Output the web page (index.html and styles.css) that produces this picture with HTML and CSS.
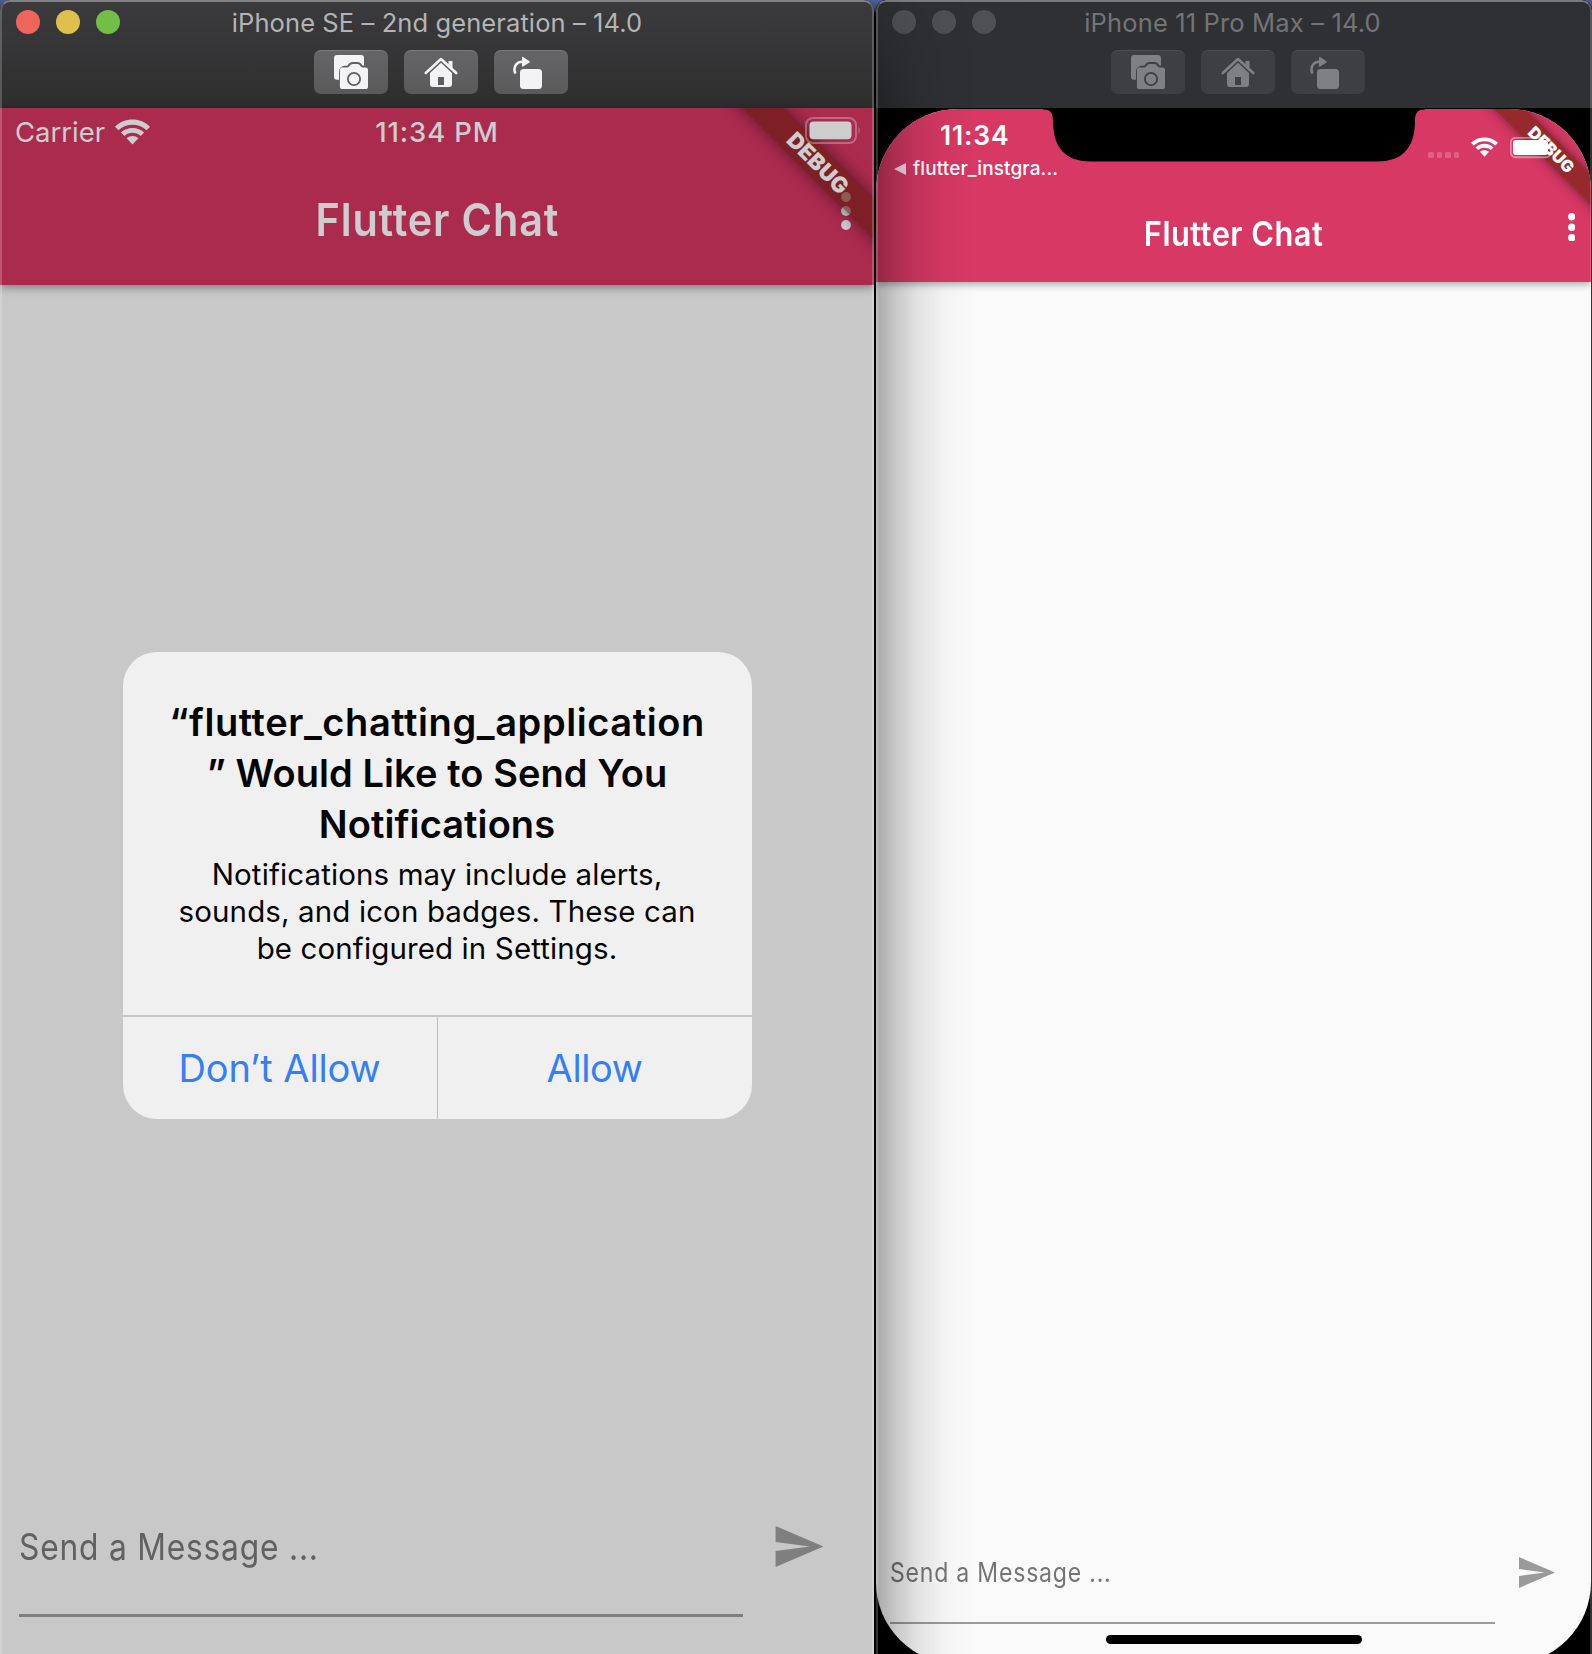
FILE: index.html
```html
<!DOCTYPE html>
<html lang="en">
<head>
<meta charset="utf-8">
<title>Simulators</title>
<link rel="stylesheet" href="styles.css">
</head>
<body>
<svg class="defs" aria-hidden="true">
  <symbol id="camera" viewBox="0 0 36 36">
    <path d="M4 1h24a3 3 0 0 1 3 3v7.500h-1.500l-1-1.500a5 5 0 0 0-4-2h-5a5 5 0 0 0-4 2l-1.200 1.800h-2.800a5.500 5.500 0 0 0-5.500 5.500v8.500h-2a3 3 0 0 1-3-3v-18.800a3 3 0 0 1 3-3z"/>
    <path fill-rule="evenodd" d="M10 13.400h4.500c2.200 0 2.300-3.400 5.200-3.400h4.600c2.900 0 3 3.400 5.200 3.400h2.900a2.600 2.600 0 0 1 2.600 2.600v16.400a2.600 2.600 0 0 1-2.600 2.600h-22.900a2.600 2.600 0 0 1-2.600-2.600v-16.400a2.600 2.600 0 0 1 3.100-2.600zM21 18a7 7 0 1 0 0 14a7 7 0 0 0 0-14zm0 1.800a5.200 5.200 0 1 1 0 10.400a5.200 5.200 0 0 1 0-10.400z"/>
  </symbol>
  <symbol id="home" viewBox="0 -1 36 36">
    <path d="M2.800 18L18 4L33.200 18" fill="none" stroke="currentColor" stroke-width="2.600" stroke-linecap="round" stroke-linejoin="round"/>
    <path d="M25.500 6h4v8.500l-4-3.800z"/>
    <path fill-rule="evenodd" d="M18 7.800l11 10.200v11a3 3 0 0 1-3 3h-16a3 3 0 0 1-3-3v-11zM15 22v8h6v-8z"/>
  </symbol>
  <symbol id="rotate" viewBox="2 -1 36 36">
    <rect x="9" y="14" width="22" height="20" rx="3.500"/>
    <path d="M4 17.500C2 11 6 6.800 11.500 6.800" fill="none" stroke="currentColor" stroke-width="2.600" stroke-linecap="round"/>
    <path d="M11 2.500q0-1 1-.500l6.500 4.200q.8.600 0 1.200l-6.500 4.200q-1 .500-1-.500z"/>
  </symbol>
  <symbol id="wifi" viewBox="0 0 34 25">
    <path d="M0 7.300C9.500-1.800 24.500-1.800 34 7.300L30.600 10.700C23 3.600 11 3.600 3.400 10.700z"/>
    <path d="M5.700 13c6.200-6 16.400-6 22.600 0l-3.400 3.400c-4.500-4.100-11.300-4.100-15.800 0z"/>
    <path d="M11.300 18.600c3.200-2.800 8.200-2.800 11.400 0l-5.700 6.100z"/>
  </symbol>
  <symbol id="more" viewBox="0 0 10 38">
    <circle cx="5" cy="5" r="4.900"/><circle cx="5" cy="19" r="4.900"/><circle cx="5" cy="33" r="4.900"/>
  </symbol>
  <symbol id="send" viewBox="0 0 21 18">
    <path d="M0 18L21 9L0 0v7l15 2l-15 2z"/>
  </symbol>
</svg>

<section class="window window--se">
  <header class="titlebar">
    <div class="lights"><i class="red"></i><i class="yellow"></i><i class="green"></i></div>
    <h1>iPhone SE – 2nd generation – 14.0</h1>
    <div class="tools">
      <button><svg><use href="#camera"/></svg></button>
      <button><svg><use href="#home"/></svg></button>
      <button><svg><use href="#rotate"/></svg></button>
    </div>
  </header>
  <div class="screen">
    <div class="top">
      <div class="status">
        <div class="carrier">Carrier <svg class="wifi"><use href="#wifi"/></svg></div>
        <time>11:34 PM</time>
        <svg class="battery" viewBox="0 0 57 27">
          <rect class="shell" x="1" y="1" width="50" height="25" rx="7"/>
          <rect x="4.500" y="4.500" width="42" height="17.700" rx="4"/>
          <path class="nub" d="M53.500 9.500q2.500 4 0 8z"/>
        </svg>
      </div>
      <div class="appbar">
        <h2>Flutter Chat</h2>
        <svg class="more"><use href="#more"/></svg>
      </div>
      <div class="debug"><span>DEBUG</span></div>
    </div>
    <main></main>
    <div class="composer">
      <div class="field"><span>Send a Message ...</span></div>
      <svg class="send"><use href="#send"/></svg>
    </div>
    <div class="alert">
      <div class="message">
        <h3><span class="app-name">“flutter_chatting_application</span><br>” Would Like to Send You<br>Notifications</h3>
        <p>Notifications may include alerts,<br>sounds, and icon badges. These can<br>be configured in Settings.</p>
      </div>
      <div class="actions"><button>Don’t Allow</button><button>Allow</button></div>
    </div>
  </div>
</section>

<section class="window window--max">
  <header class="titlebar">
    <div class="lights"><i></i><i></i><i></i></div>
    <h1>iPhone 11 Pro Max – 14.0</h1>
    <div class="tools">
      <button><svg><use href="#camera"/></svg></button>
      <button><svg><use href="#home"/></svg></button>
      <button><svg><use href="#rotate"/></svg></button>
    </div>
  </header>
  <div class="screen">
    <div class="top">
      <svg class="notch" viewBox="0 0 382 53"><path d="M0 0h382v.500c-7 0-10 3-10 11c0 28-13 41-38 41h-286c-25 0-38-13-38-41c0-8-3-11-10-11z"/></svg>
      <div class="status">
        <div class="clock"><time>11:34</time><div class="back"><svg viewBox="0 0 12 12"><path d="M0 6L12 0v12z"/></svg>flutter_instgra...</div></div>
        <div class="indicators">
          <div class="cell"><i></i><i></i><i></i><i></i></div>
          <svg class="wifi"><use href="#wifi"/></svg>
          <svg class="battery" viewBox="0 0 42 22">
            <rect class="shell" x=".8" y=".8" width="40" height="19.500" rx="5"/>
            <rect x="3" y="3" width="35" height="15" rx="3"/>
          </svg>
        </div>
      </div>
      <div class="appbar">
        <h2>Flutter Chat</h2>
        <svg class="more"><use href="#more"/></svg>
      </div>
      <div class="debug"><span>DEBUG</span></div>
    </div>
    <main></main>
    <div class="composer">
      <div class="field"><span>Send a Message ...</span></div>
      <svg class="send"><use href="#send"/></svg>
    </div>
    <div class="home-indicator"></div>
  </div>
</section>
</body>
</html>
```

FILE: styles.css
```css
* { box-sizing: border-box; }

body {
  margin: 0;
  width: 1592px;
  height: 1654px;
  display: flex;
  gap: 2px;
  overflow: hidden;
  background: linear-gradient(#4c5f96 0, #39487a 8px, #000 14px);
  font-family: Inter, "Liberation Sans", sans-serif;
}

h1, h2, h3, p { margin: 0; }
button { border: 0; margin: 0; padding: 0; font: inherit; color: inherit; background: none; }
svg { display: block; fill: currentColor; flex: none; }
.defs { position: absolute; width: 0; height: 0; }

/* Simulator window */
.window {
  position: relative;
  height: 1654px;
  display: flex;
  flex-direction: column;
  overflow: hidden;
  border-radius: 10px 10px 0 0;
}
.window::after {
  content: "";
  position: absolute;
  inset: 0;
  z-index: 5;
  border: 2px solid rgba(255, 255, 255, .2);
  border-top-color: rgba(255, 255, 255, .36);
  border-bottom: 0;
  border-radius: 10px 10px 0 0;
  pointer-events: none;
}
.window--se { width: 874px; }
.window--max { width: 716px; background: #000; }

.titlebar {
  position: relative;
  height: 108px;
  flex: none;
  display: flex;
  flex-direction: column;
  align-items: center;
  padding-top: 1px;
  background: linear-gradient(#3b3b3d, #2e2e2f);
  color: #b4b4b5;
}
.titlebar h1 {
  font-size: 25.500px;
  font-weight: 400;
  line-height: 44px;
  letter-spacing: .1px;
}
.lights { position: absolute; left: 16px; top: 10px; display: flex; gap: 16px; }
.lights i { width: 24px; height: 24px; border-radius: 50%; background: #4f5053; }
.lights .red { background: #ed6659; }
.lights .yellow { background: #e0c04c; }
.lights .green { background: #72be47; }
.tools { display: flex; gap: 16px; margin: 5px 0 0 8px; }
.tools button {
  width: 74px;
  height: 44px;
  display: grid;
  place-items: center;
  border-radius: 7px;
  background: linear-gradient(#656567, #5a5a5b);
  box-shadow: inset 0 1px rgba(255, 255, 255, .14);
  color: #f3f3f5;
}
.tools svg { width: 36px; height: 36px; }

.window--max .titlebar { background: #2f3033; color: #737477; }
.window--max h1 { letter-spacing: .15px; padding-right: 3px; }
.window--max .tools button { background: #3e3f42; color: #7f8083; box-shadow: inset 0 1px rgba(255, 255, 255, .08); }

/* Shade cast by the neighbouring window */
.window--max::before {
  content: "";
  position: absolute;
  z-index: 4;
  inset: 0 auto 0 0;
  width: 100px;
  background: linear-gradient(90deg, rgba(0,0,0,.32), rgba(0,0,0,.2) 20px, rgba(0,0,0,.09) 42px, rgba(0,0,0,.025) 70px, transparent);
  -webkit-mask: linear-gradient(rgba(0,0,0,.2), #000 130px);
  mask: linear-gradient(rgba(0,0,0,.2), #000 130px);
  pointer-events: none;
}

/* Phone screen */
.screen { position: relative; flex: 1; display: flex; flex-direction: column; }
.screen main { flex: 1; }
.top { position: relative; z-index: 1; display: flex; flex-direction: column; flex: none; }
.status { position: relative; z-index: 2; display: grid; grid-template-columns: 1fr auto 1fr; align-items: center; }
.appbar { flex: 1; display: grid; grid-template-columns: 1fr auto 1fr; align-items: center; }
.appbar h2 { grid-column: 2; font-weight: 600; white-space: nowrap; transform: scaleX(.92); }
.more { justify-self: end; }
.shell { fill: none; stroke: currentColor; stroke-width: 2; opacity: .4; }
.nub { opacity: .4; }
.composer { display: flex; flex: none; }
.field { white-space: pre; }
.field span { display: inline-block; transform: scaleX(.87); transform-origin: 0 50%; }

/* Corner ribbon */
.debug { position: absolute; inset: 0; z-index: 1; overflow: hidden; }
.debug span {
  position: absolute;
  display: block;
  text-align: center;
  font-weight: 900;
  transform: translate(-50%, -50%) rotate(45deg);
}

/* iPhone SE */
.window--se .screen { background: #c8c8c8; }
.window--se .top { height: 177px; background: #ab2b4f; color: #cdcdce; box-shadow: 0 2px 9px rgba(0, 0, 0, .4); }
.window--se .status { height: 48px; padding: 0 13px 0 15px; font-size: 27.500px; }
.carrier { display: flex; align-items: center; gap: 10px; }
.carrier .wifi { width: 35px; height: 26px; margin-top: -1px; }
.window--se time { font-weight: 500; letter-spacing: .9px; transform: translateX(-1px); }
.window--se .battery { width: 57px; height: 27px; justify-self: end; margin: -3px -1px 0 0; }
.window--se .appbar { padding-bottom: 2px; }
.window--se h2 { font-size: 45px; letter-spacing: .9px; }
.window--se .more { width: 10px; height: 38px; margin: -18px 23px 0 0; }
.window--se .debug span {
  left: 818px;
  top: 55px;
  width: 300px;
  height: 28px;
  line-height: 28px;
  font-size: 22px;
  background: rgba(98, 26, 11, .63);
  box-shadow: 0 0 16px rgba(0, 0, 0, .5);
}
.window--se .composer { height: 154px; padding-left: 19px; gap: 32px; }
.window--se .field {
  width: 724px;
  height: 117px;
  line-height: 94px;
  border-bottom: 3px solid #7f7f7f;
  font-size: 36.500px;
  letter-spacing: .9px;
  color: #616161;
}
.window--se .send { width: 49px; height: 41px; margin-top: 26px; color: #7f7f7f; }

/* Permission alert */
.alert {
  position: absolute;
  z-index: 3;
  left: 122.500px;
  top: 544px;
  width: 629px;
  height: 467px;
  display: flex;
  flex-direction: column;
  overflow: hidden;
  border-radius: 34px;
  background: #f0f0f0;
  text-align: center;
  color: #050505;
}
.message { flex: 1; padding-top: 45px; border-bottom: 2px solid #c6c6c6; white-space: nowrap; }
.alert h3 { font-size: 38px; font-weight: 600; line-height: 51.200px; letter-spacing: .08px; }
.app-name { letter-spacing: .58px; }
.alert p { font-size: 29.500px; line-height: 37.300px; letter-spacing: .12px; margin-top: 5px; }
.actions { height: 102px; display: flex; color: #347ff6; font-size: 38px; }
.actions button { flex: 1; line-height: 102px; letter-spacing: -.1px; }
.actions button + button { border-left: 1px solid #bcbcbc; letter-spacing: -.4px; }

/* iPhone 11 Pro Max */
.window--max .screen {
  flex: none;
  width: 715px;
  height: 1555px;
  margin-top: 1px;
  border-radius: 82px;
  overflow: hidden;
  background: #fafafa;
}
.window--max .top { height: 173px; background: #d73964; color: #fff; box-shadow: 0 2px 8px rgba(0, 0, 0, .36); }
.notch { position: absolute; z-index: 3; left: 167px; top: -.500px; width: 382px; height: 53px; color: #000; }
.window--max .status { height: 80px; grid-template-columns: 1fr auto; align-items: start; }
.clock time { display: block; margin: 9px 0 0 64px; font-size: 26.500px; font-weight: 600; line-height: 34px; letter-spacing: .8px; }
.back { display: flex; align-items: center; gap: 7px; margin: 6px 0 0 18px; font-size: 19px; font-weight: 500; line-height: 22px; letter-spacing: .1px; }
.back svg { width: 12px; height: 12px; opacity: .85; }
.indicators { display: flex; margin: 28px 39px 0 0; }
.cell { display: flex; gap: 3px; margin: 15px 12px 0 0; }
.cell i { width: 5.500px; height: 5.500px; border-radius: 1.500px; background: rgba(255, 255, 255, .2); }
.window--max .wifi { width: 27px; height: 20px; margin: 0 12px 0 0; }
.window--max .battery { width: 42px; height: 22px; }
.window--max h2 { font-size: 33.500px; letter-spacing: .500px; }
.window--max .appbar { padding-bottom: 4px; }
.window--max .more { width: 7.500px; height: 28.500px; margin: -13px 16px 0 0; }
.window--max .debug span {
  left: 674.500px;
  top: 40.500px;
  width: 260px;
  height: 21px;
  line-height: 21px;
  font-size: 16.500px;
  background: rgba(113, 31, 10, .63);
  box-shadow: 0 0 12px rgba(0, 0, 0, .5);
}
.window--max .composer { height: 120px; padding-left: 14px; gap: 24px; }
.window--max .field {
  width: 605px;
  height: 80px;
  line-height: 56px;
  border-bottom: 2px solid #9c9c9c;
  font-size: 26.500px;
  letter-spacing: .900px;
  color: #757575;
}
.window--max .send { width: 36px; height: 31px; margin-top: 13px; color: #9a9a9a; }
.home-indicator { position: absolute; left: 230px; top: 1526px; width: 256px; height: 9px; border-radius: 5px; background: #000; }
```
